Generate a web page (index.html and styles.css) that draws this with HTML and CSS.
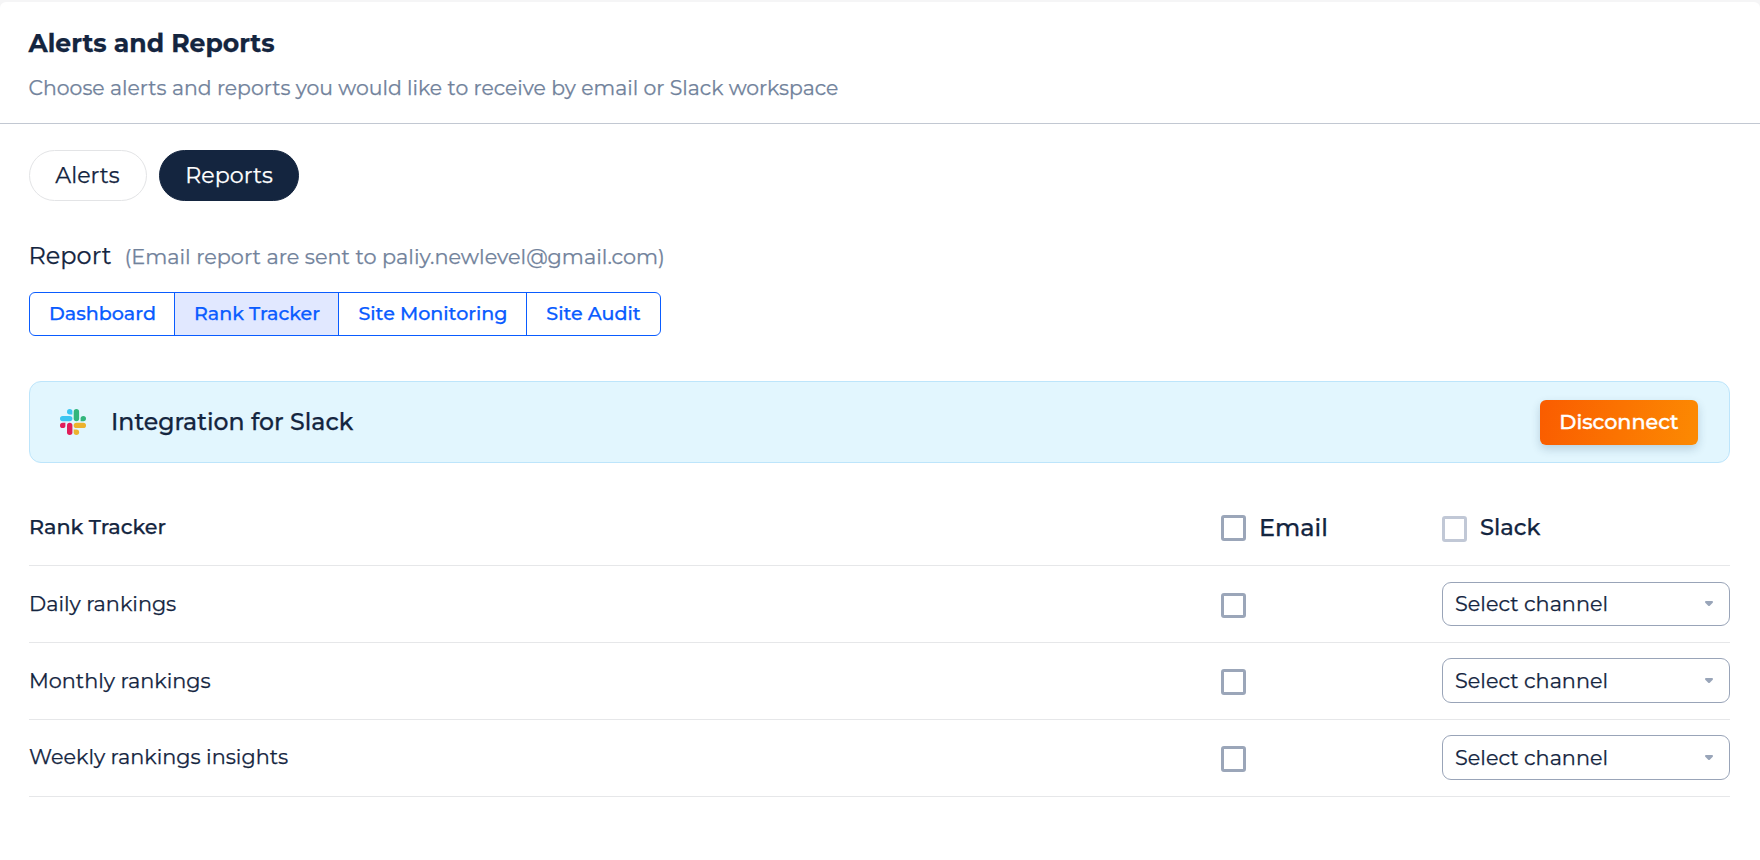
FILE: index.html
```html
<!DOCTYPE html>
<html lang="en">
<head>
<meta charset="utf-8">
<title>Alerts and Reports</title>
<link rel="stylesheet" href="styles.css">
</head>
<body>
<main class="card">
  <header class="head">
    <h1 class="title">Alerts and Reports</h1>
    <p class="subtitle">Choose alerts and reports you would like to receive by email or Slack workspace</p>
  </header>
  <div class="content">
    <nav class="pills">
      <button class="pill pill-alerts">Alerts</button>
      <button class="pill pill-reports active">Reports</button>
    </nav>
    <div class="report-line">
      <h2 class="report-title">Report</h2>
      <span class="report-note">(Email report are sent to paliy.newlevel@gmail.com)</span>
    </div>
    <div class="tabs">
      <button class="tab tab-dashboard">Dashboard</button>
      <button class="tab tab-rank selected">Rank Tracker</button>
      <button class="tab tab-monitoring">Site Monitoring</button>
      <button class="tab tab-audit">Site Audit</button>
    </div>
    <section class="banner">
      <svg class="slack" viewBox="0 0 26 26">
        <g fill="#3cc5f1"><path d="M9.7 0a2.7 2.7 0 0 0 0 5.4h2.7V2.7A2.7 2.7 0 0 0 9.7 0z"/><rect x="0" y="6.9" width="12.4" height="5.4" rx="2.7"/></g>
        <g fill="#32b67c"><rect x="13.7" y="0" width="5.4" height="12.3" rx="2.7"/><path d="M20.6 12.3V9.6a2.7 2.7 0 1 1 2.7 2.7z"/></g>
        <g fill="#ecb22e"><rect x="13.7" y="13.7" width="12.3" height="5.4" rx="2.7"/><path d="M13.7 20.6h2.7a2.7 2.7 0 1 1-2.7 2.7z"/></g>
        <g fill="#e01e5a"><rect x="7" y="13.7" width="5.4" height="12.3" rx="2.7"/><path d="M5.4 13.7v2.7a2.7 2.7 0 1 1-2.7-2.7z"/></g>
      </svg>
      <span class="banner-text">Integration for Slack</span>
      <button class="disconnect">Disconnect</button>
    </section>
    <section class="table">
      <div class="row row-head">
        <span class="name">Rank Tracker</span>
        <label class="check-label"><i class="check"></i><span class="col-email">Email</span></label>
        <label class="check-label slack-label"><i class="check muted"></i><span class="col-slack">Slack</span></label>
      </div>
      <div class="row row-first">
        <span class="name">Daily rankings</span>
        <i class="check"></i>
        <div class="select"><span>Select channel</span><svg class="caret" viewBox="0 0 8 5"><path d="M1 0h6q1 0 1 1 0 .5-.5 1L5 4.500q-1 1-2 0L.5 2Q0 1.500 0 1 0 0 1 0z"/></svg></div>
      </div>
      <div class="row">
        <span class="name">Monthly rankings</span>
        <i class="check"></i>
        <div class="select"><span>Select channel</span><svg class="caret" viewBox="0 0 8 5"><path d="M1 0h6q1 0 1 1 0 .5-.5 1L5 4.500q-1 1-2 0L.5 2Q0 1.500 0 1 0 0 1 0z"/></svg></div>
      </div>
      <div class="row row-last">
        <span class="name">Weekly rankings insights</span>
        <i class="check"></i>
        <div class="select"><span>Select channel</span><svg class="caret" viewBox="0 0 8 5"><path d="M1 0h6q1 0 1 1 0 .5-.5 1L5 4.500q-1 1-2 0L.5 2Q0 1.500 0 1 0 0 1 0z"/></svg></div>
      </div>
    </section>
  </div>
</main>
</body>
</html>
```

FILE: styles.css
```css
* { box-sizing: border-box; }
body {
  margin: 0;
  padding-top: 2px;
  background: #f5f5f6;
  color: #14253f;
  font-family: Montserrat, Inter, "Liberation Sans", sans-serif;
  font-size: 20.75px;
  -webkit-text-stroke: .25px;
}
button { font-family: inherit; margin: 0; padding: 0; background: none; border: 0; white-space: nowrap; }
.card { height: 858px; background: #fff; border-radius: 6px 6px 0 0; }
.head { height: 122px; padding: 24px 28.6px 0; border-bottom: 1px solid #c2c8d2; }
.title { margin: 0; font-size: 25.1px; line-height: 34px; font-weight: 700; }
.subtitle { margin: 14px 0 0; font-size: 20.4px; line-height: 28px; color: #71829b; }
.content { padding: 26px 30px 0 29px; }
.pills { display: flex; gap: 12px; }
.pill { height: 51px; border: 1px solid #e3e4e6; border-radius: 26px; font-size: 22.2px; color: #14253f; text-align: center; }
.pill-alerts { width: 118px; padding-right: 1px; }
.pill-reports { width: 140px; }
.pill.active { background: #14253f; border-color: #14253f; color: #fff; }
.report-line { display: flex; align-items: baseline; gap: 13px; margin: 37px 0 0 -.5px; height: 54px; line-height: 36px; white-space: nowrap; }
.report-title { margin: 0; font-size: 24px; font-weight: 400; }
.report-note { color: #71829b; font-size: 20.8px; }
.tabs { display: flex; width: 632px; height: 44px; border: 1px solid #0a5cff; border-radius: 6px; overflow: hidden; }
.tab { padding: 0 0 2px 1px; border-right: 1px solid #0a5cff; font-size: 19.1px; font-weight: 500; color: #0a5cff; }
.tab:last-child { border-right: 0; padding-left: 0; }
.tab-dashboard { width: 145px; }
.tab-rank { width: 164px; }
.tab-monitoring { width: 188px; }
.tab-audit { flex: 1; }
.tab.selected { background: #e1e8ff; }
.banner { display: flex; align-items: center; height: 82px; margin-top: 45px; padding: 0 31px 0 30px; background: #e2f6fe; border: 1px solid #bde5fb; border-radius: 12px; }
.slack { width: 26px; height: 26px; margin-right: 25px; }
.banner-text { flex: 1; padding-bottom: 2px; font-size: 23.6px; font-weight: 500; }
.disconnect { width: 158px; height: 45px; padding-bottom: 2px; border-radius: 6px; background: linear-gradient(100deg, #fa5c00, #fc8a02); color: #fff; font-size: 20.7px; font-weight: 500; -webkit-text-stroke: .4px; box-shadow: 0 4px 10px rgba(20, 60, 90, .2); }
.table { margin-top: 26px; }
.row { display: grid; grid-template-columns: 1192px 221px 288px; align-items: center; height: 77px; border-bottom: 1px solid #e6e7e9; }
.name { padding-bottom: 1px; white-space: nowrap; }
.row-head .name { font-weight: 500; }
.row-last .name { padding-bottom: 3px; }
.check { display: block; width: 25px; height: 26px; margin-top: 2px; border: 3px solid #9ba6b9; border-radius: 3px; }
.check.muted { margin-top: 4px; border-color: #c1c8d6; }
.check-label { display: flex; align-items: center; gap: 13px; font-size: 23.9px; font-weight: 500; }
.slack-label { font-size: 22.6px; }
.col-slack { padding-bottom: 1px; }
.select { display: flex; align-items: center; justify-content: space-between; height: 45px; margin-bottom: 1px; padding: 0 16px 0 12px; border: 1px solid #99a4b8; border-radius: 9px; }
.row-first .check { height: 25px; margin-top: 3px; }
.row-first .select { height: 44px; margin-bottom: 0; padding-bottom: 1px; }
.caret { width: 8px; height: 5px; fill: #99a5b9; }
```
